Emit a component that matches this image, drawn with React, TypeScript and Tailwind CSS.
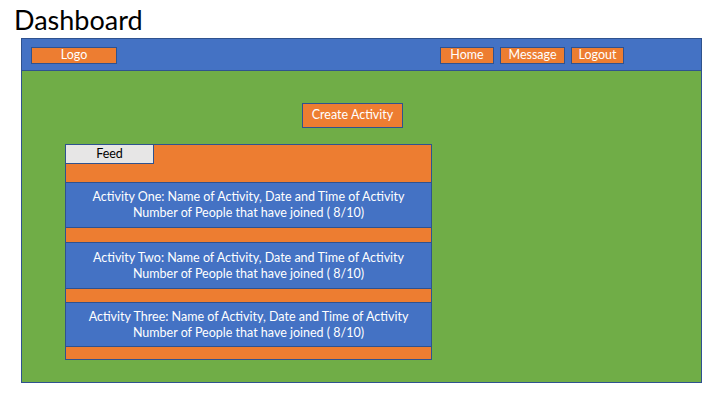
import React from "react";

const activities = [
  { name: "One", h: "h-[46px]", gap: "h-[14px]" },
  { name: "Two", h: "h-[47px]", gap: "h-[13px]" },
  { name: "Three", h: "h-[45px]", gap: "h-[12px]" },
];

function OrangeBtn({ label, w }: { label: string; w: string }) {
  return (
    <div
      className={`flex h-[17px] items-center justify-center border border-[#2F528F] bg-[#ED7D31] text-[12.5px] leading-none text-white ${w}`}
    >
      {label}
    </div>
  );
}

export default function App() {
  return (
    <div
      className="relative h-[405px] w-[720px] overflow-hidden bg-white"
      style={{ fontFamily: "Lato, 'Open Sans', sans-serif" }}
    >
      <div className="pl-[14px] pt-[5px] text-[27px] leading-[30px] text-black">Dashboard</div>
      <div className="ml-[21px] mt-[3px] flex h-[345px] w-[681px] flex-col border border-[#2F528F] bg-[#70AD47]">
        <div className="flex h-[32px] shrink-0 items-start border-b border-[#2F528F] bg-[#4472C4] pt-[8px]">
          <div className="ml-[9px]">
            <OrangeBtn label="Logo" w="w-[86px]" />
          </div>
          <div className="ml-auto mr-[77px] flex gap-[6px]">
            <OrangeBtn label="Home" w="w-[54px]" />
            <OrangeBtn label="Message" w="w-[65px]" />
            <OrangeBtn label="Logout" w="w-[53px]" />
          </div>
        </div>
        <div className="flex flex-col">
          <div className="ml-[280px] mt-[32px] flex h-[25px] w-[101px] items-center justify-center border border-[#2F528F] bg-[#ED7D31] text-[12.5px] text-white">
            Create Activity
          </div>
          <div className="ml-[43px] mt-[16px] flex w-[367px] flex-col border border-[#2F528F] bg-[#ED7D31]">
            <div className="h-[37px]">
              <div className="flex h-[19px] w-[88px] items-center justify-center border-b border-r border-[#2F528F] bg-[#E7E6E6] text-[12.5px] text-black">
                Feed
              </div>
            </div>
            {activities.map((a) => (
              <React.Fragment key={a.name}>
                <div
                  className={`flex flex-col items-center justify-center border-y border-[#2F528F] bg-[#4472C4] text-[12.5px] leading-[16px] text-white ${a.h}`}
                >
                  <div>Activity {a.name}: Name of Activity, Date and Time of Activity</div>
                  <div>Number of People that have joined ( 8/10)</div>
                </div>
                <div className={a.gap} />
              </React.Fragment>
            ))}
          </div>
        </div>
      </div>
    </div>
  );
}
